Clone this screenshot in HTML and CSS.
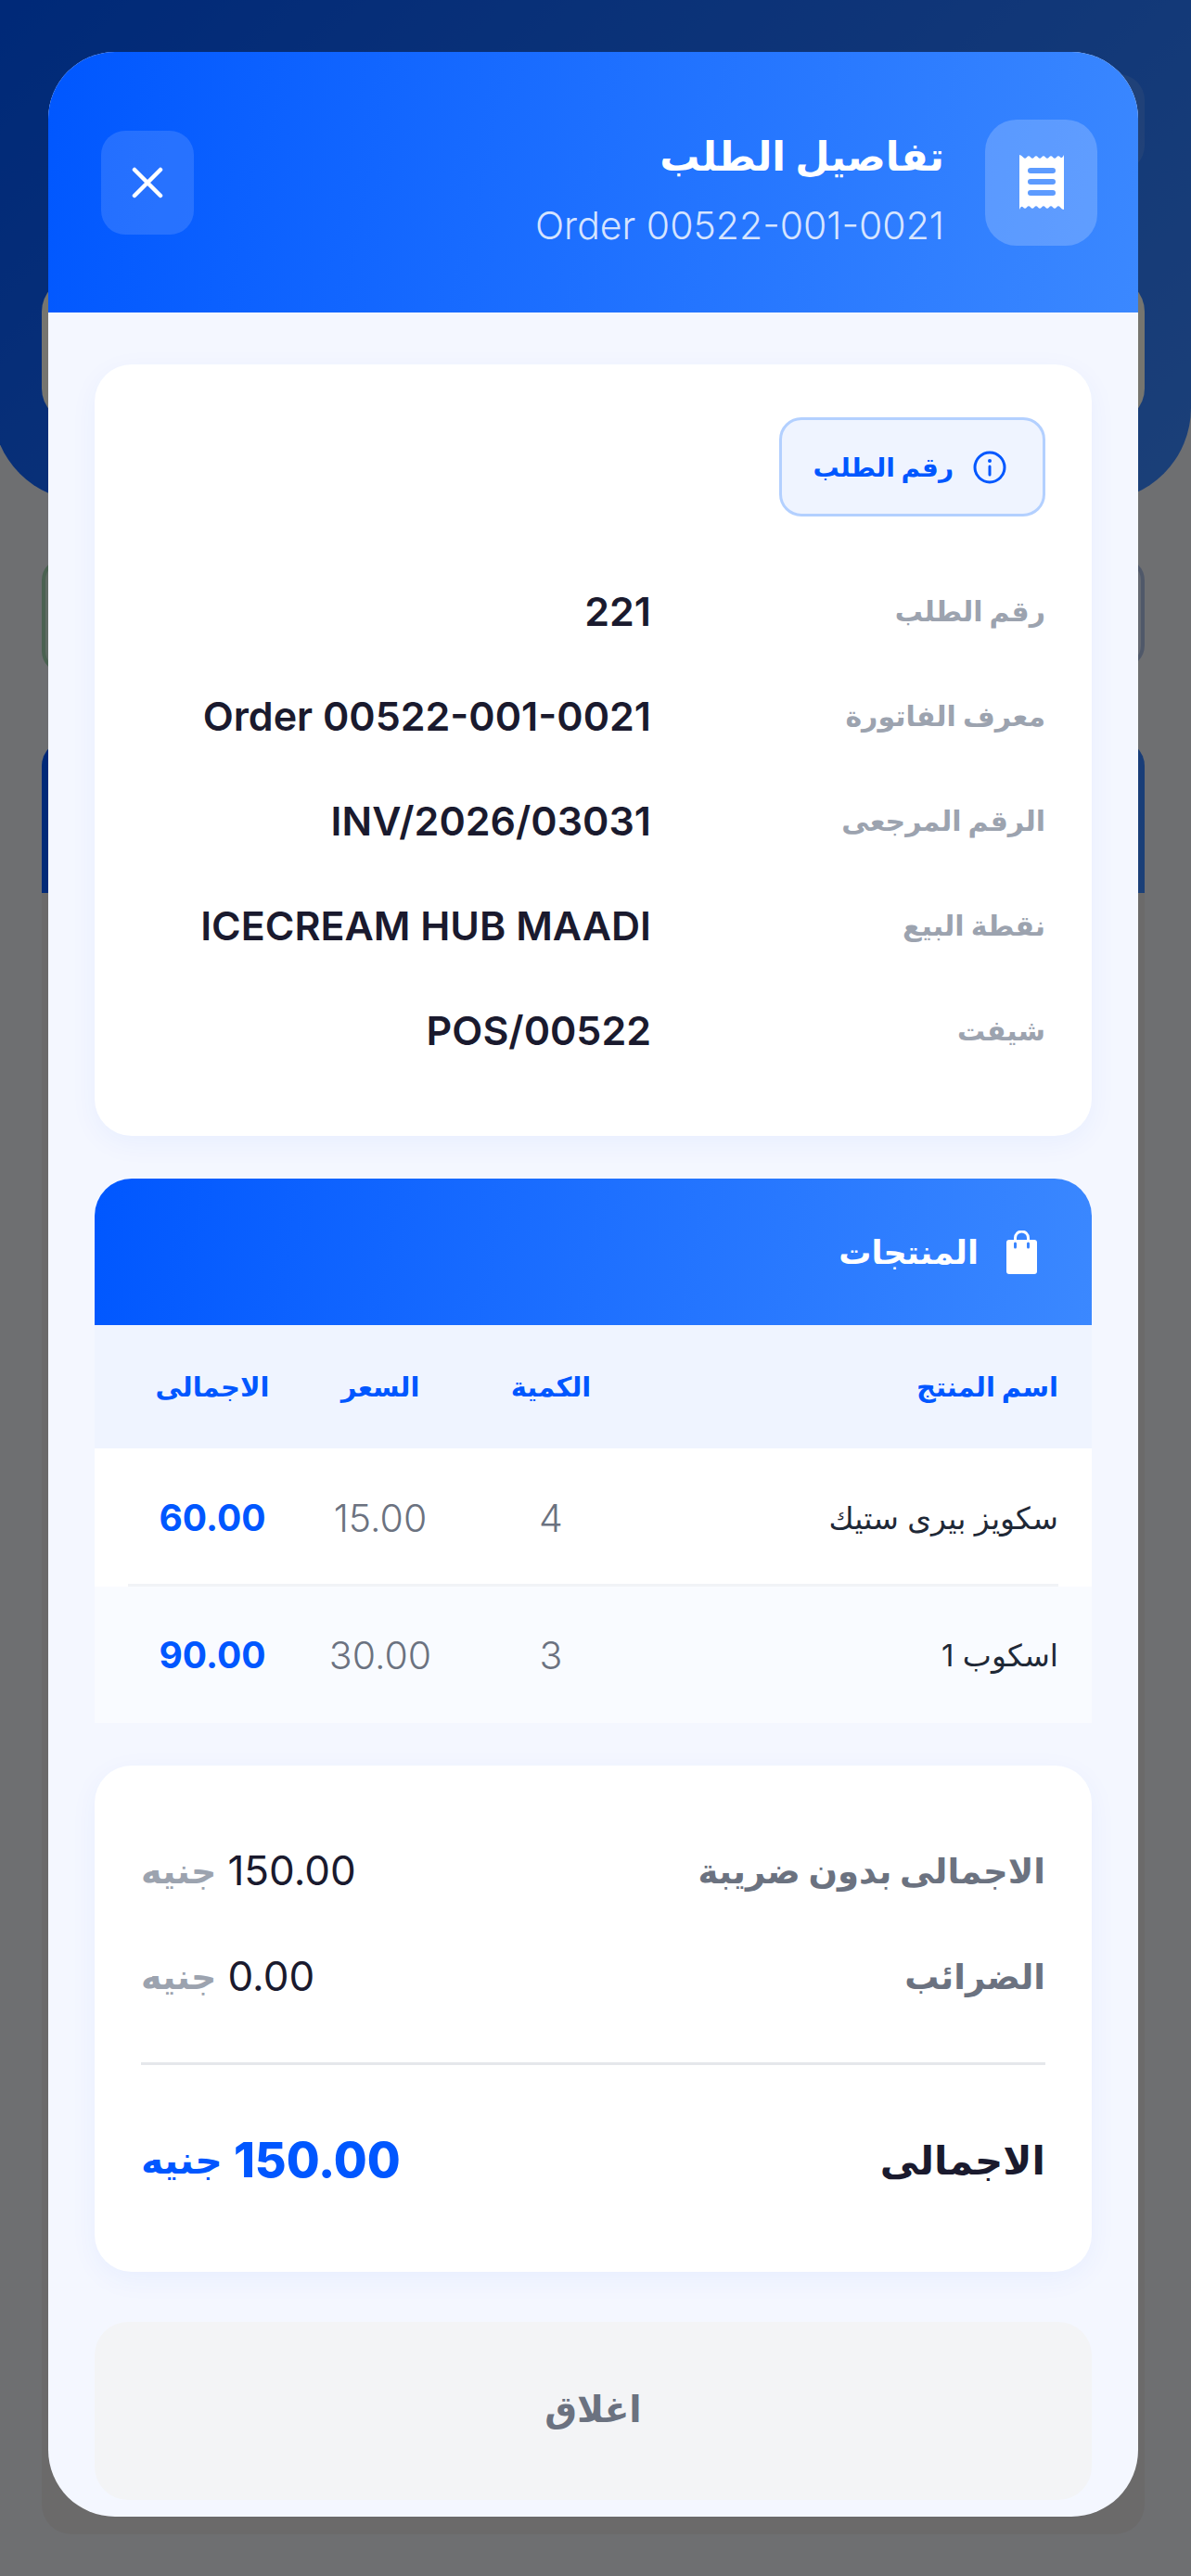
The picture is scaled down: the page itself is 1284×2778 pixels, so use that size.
FILE: index.html
```html
<!DOCTYPE html>
<html lang="ar" dir="rtl">
<head>
    <meta charset="UTF-8">
    <meta name="viewport" content="width=device-width, initial-scale=1.0">
    <title>تفاصيل الطلب</title>
    <link rel="stylesheet" href="styles.css">
</head>
<body>
    <!-- page behind the modal -->
    <div class="page">
        <div class="hero">
            <div class="hero-btn"></div>
            <div class="hero-card"></div>
        </div>
        <div class="status-row">
            <div class="status status-blue"></div>
            <div class="status status-green"></div>
        </div>
        <div class="back-banner"></div>
        <div class="back-list"></div>
    </div>

    <div class="overlay">
        <div class="sheet">
            <div class="sheet-header">
                <div class="title-group">
                    <div class="title-icon">
                        <svg width="48" height="59" viewBox="0 0 48 59">
                            <path fill="#fff" fill-rule="evenodd" d="M0 0q2 0 4 2.5t4 0 4 0 4 0 4 0 4 0 4 0 4 0 4 0 4 0 4 0 4-2.5V59q-2 0-4-2.5t-4 0-4 0-4 0-4 0-4 0-4 0-4 0-4 0-4 0-4 0-4 2.5zM12 14a3 3 0 0 0 0 6h24a3 3 0 0 0 0-6zM12 26a3 3 0 0 0 0 6h24a3 3 0 0 0 0-6zM12 38a3 3 0 0 0 0 6h24a3 3 0 0 0 0-6z"/>
                        </svg>
                    </div>
                    <div class="title-text">
                        <div class="title">تفاصيل الطلب</div>
                        <div class="subtitle"><span dir="ltr">Order 00522-001-0021</span></div>
                    </div>
                </div>
                <button class="close-x">
                    <svg width="34" height="34" viewBox="0 0 34 34">
                        <path d="M3 3l28 28M31 3L3 31" stroke="#fff" stroke-width="4.5" stroke-linecap="round" fill="none"/>
                    </svg>
                </button>
            </div>

            <div class="sheet-body">
                <div class="card info-card">
                    <div class="chip">
                        <svg width="36" height="36" viewBox="0 0 36 36">
                            <circle cx="18" cy="18" r="16" stroke="#0057ff" stroke-width="3" fill="none"/>
                            <path d="M18 17v9" stroke="#0057ff" stroke-width="3" stroke-linecap="round"/>
                            <circle cx="18" cy="11" r="2" fill="#0057ff"/>
                        </svg>
                        <span>رقم الطلب</span>
                    </div>
                    <div class="info-row">
                        <div class="info-label">رقم الطلب</div>
                        <div class="info-value"><span dir="ltr">221</span></div>
                    </div>
                    <div class="info-row">
                        <div class="info-label">معرف الفاتورة</div>
                        <div class="info-value"><span dir="ltr">Order 00522-001-0021</span></div>
                    </div>
                    <div class="info-row">
                        <div class="info-label">الرقم المرجعى</div>
                        <div class="info-value"><span dir="ltr">INV/2026/03031</span></div>
                    </div>
                    <div class="info-row">
                        <div class="info-label">نقطة البيع</div>
                        <div class="info-value"><span dir="ltr">ICECREAM HUB MAADI</span></div>
                    </div>
                    <div class="info-row">
                        <div class="info-label">شيفت</div>
                        <div class="info-value"><span dir="ltr">POS/00522</span></div>
                    </div>
                </div>

                <div class="products">
                    <div class="products-head">
                        <svg width="33" height="47" viewBox="0 0 33 47">
                            <path d="M9.5 13V8a7 7 0 0 1 14 0v5" stroke="#fff" stroke-width="3" fill="none"/>
                            <rect y="10" width="33" height="37" rx="3" fill="#fff"/>
                            <path d="M9.5 14v4M23.5 14v4" stroke="#3a85ff" stroke-width="3" stroke-linecap="round"/>
                        </svg>
                        <span>المنتجات</span>
                    </div>
                    <div class="t-row t-head">
                        <div class="t-name">اسم المنتج</div>
                        <div class="t-cell">الكمية</div>
                        <div class="t-cell">السعر</div>
                        <div class="t-cell">الاجمالى</div>
                    </div>
                    <div class="t-row t-item">
                        <div class="t-name">سكويز بيرى ستيك</div>
                        <div class="t-cell t-num">4</div>
                        <div class="t-cell t-num">15.00</div>
                        <div class="t-cell t-total">60.00</div>
                    </div>
                    <div class="t-row t-item t-alt">
                        <div class="t-name">اسكوب 1</div>
                        <div class="t-cell t-num">3</div>
                        <div class="t-cell t-num">30.00</div>
                        <div class="t-cell t-total">90.00</div>
                    </div>
                </div>

                <div class="card summary">
                    <div class="sum-row">
                        <div class="sum-label">الاجمالى بدون ضريبة</div>
                        <div class="sum-value" dir="ltr"><span class="cur">جنيه</span><span>150.00</span></div>
                    </div>
                    <div class="sum-row">
                        <div class="sum-label">الضرائب</div>
                        <div class="sum-value" dir="ltr"><span class="cur">جنيه</span><span>0.00</span></div>
                    </div>
                    <div class="sum-line"></div>
                    <div class="sum-row sum-total">
                        <div class="sum-label">الاجمالى</div>
                        <div class="sum-value" dir="ltr"><span class="cur">جنيه</span><span>150.00</span></div>
                    </div>
                </div>

                <button class="close-btn">اغلاق</button>
            </div>
        </div>
    </div>
</body>
</html>
```

FILE: styles.css
```css
* {
    box-sizing: border-box;
}

body {
    margin: 0;
    height: 2778px;
    overflow: hidden;
    background-color: #e9ebf1;
    font-family: Inter, "DejaVu Sans", sans-serif;
}

button {
    border: none;
    font-family: inherit;
    padding: 0;
}

/* page behind the modal */
.hero {
    height: 540px;
    margin-left: -8px;
    padding-top: 80px;
    background: linear-gradient(135deg, #0057ff, #3b88ff);
    border-radius: 0 0 100px 100px;
}

.hero-btn {
    width: 100px;
    height: 105px;
    margin-right: 50px;
    background-color: rgba(255, 255, 255, 0.12);
    border-radius: 28px;
}

.hero-card {
    height: 155px;
    margin: 115px 50px 0 53px;
    background-color: #fbf9ec;
    border-radius: 36px;
}

.status-row {
    display: flex;
    gap: 20px;
    margin: 62px 50px 0 45px;
}

.status {
    flex: 1;
    height: 118px;
    border-radius: 24px;
}

.status-blue {
    background-color: #d6dff2;
    border: 4px solid #a9bce0;
}

.status-green {
    height: 124px;
    background-color: #cfe4d4;
    border: 4px solid #9fd0ac;
}

.back-banner {
    height: 165px;
    margin: 72px 50px 0 45px;
    background: linear-gradient(135deg, #0057ff, #3b88ff);
    border-radius: 28px 28px 0 0;
}

.back-list {
    height: 1770px;
    margin: 0 50px 0 45px;
    background-color: #e4e2e1;
    border-radius: 0 0 32px 32px;
}

/* modal */
.overlay {
    position: fixed;
    top: 0;
    left: 0;
    right: 0;
    bottom: 0;
    padding: 56px 57px 64px 52px;
    background-color: rgba(0, 0, 0, 0.53);
}

.sheet {
    height: 2658px;
    background-color: #f4f7ff;
    border-radius: 72px;
    overflow: hidden;
}

.sheet-header {
    display: flex;
    justify-content: space-between;
    align-items: center;
    height: 281px;
    padding: 0 44px 0 57px;
    background: linear-gradient(100deg, #0057ff, #3b88ff);
}

.title-group {
    display: flex;
    align-items: center;
    gap: 44px;
}

.title-icon {
    display: flex;
    justify-content: center;
    align-items: center;
    width: 121px;
    height: 136px;
    background-color: rgba(255, 255, 255, 0.2);
    border-radius: 34px;
}

.title-text {
    padding-top: 8px;
}

.title {
    color: #fff;
    font-size: 43px;
    font-weight: 700;
    line-height: 66px;
}

.subtitle {
    margin-top: 18px;
    color: rgba(255, 255, 255, 0.82);
    font-size: 41px;
    font-weight: 300;
    line-height: 48px;
}

.close-x {
    display: flex;
    justify-content: center;
    align-items: center;
    width: 100px;
    height: 112px;
    background-color: rgba(255, 255, 255, 0.13);
    border-radius: 26px;
}

.sheet-body {
    padding: 56px 50px 0;
}

.card {
    background-color: #fff;
    border-radius: 40px;
    box-shadow: 0 8px 30px rgba(0, 87, 255, 0.05);
}

.info-card {
    padding: 57px 50px 58px;
}

.chip {
    display: flex;
    align-items: center;
    gap: 21px;
    width: fit-content;
    height: 107px;
    padding: 0 39px 0 34px;
    margin-bottom: 45px;
    color: #0057ff;
    font-size: 28px;
    font-weight: 700;
    background-color: #eff4ff;
    border: 3px solid #b3d0ff;
    border-radius: 24px;
}

.info-row {
    display: flex;
    align-items: center;
    height: 113px;
}

.info-label {
    flex: 0 0 425px;
    color: #9ca3af;
    font-size: 30px;
    font-weight: 700;
}

.info-value {
    color: #1a1a2e;
    font-size: 43px;
    font-weight: 600;
}

.products {
    margin-top: 46px;
    background-color: #fff;
    border-radius: 40px 40px 0 0;
    overflow: hidden;
}

.products-head {
    display: flex;
    align-items: center;
    gap: 30px;
    height: 158px;
    padding-right: 59px;
    color: #fff;
    font-size: 35px;
    font-weight: 700;
    background: linear-gradient(100deg, #0057ff, #3b88ff);
}

.t-row {
    display: grid;
    grid-template-columns: 1fr 184px 184px 178px;
    align-items: center;
    padding: 0 36px 0 38px;
}

.t-head {
    height: 133px;
    color: #0057ff;
    font-size: 29px;
    font-weight: 700;
    background-color: #eff4ff;
}

.t-item {
    height: 149px;
    color: #1f2937;
    font-size: 33px;
    background:
        linear-gradient(#f1f3f6, #f1f3f6) 36px 100% / calc(100% - 72px) 3px no-repeat,
        #fff;
}

.t-alt {
    height: 147px;
    background: #f9fbff;
}

.t-cell {
    text-align: center;
}

.t-num {
    color: #6b7280;
    font-size: 41px;
    font-weight: 300;
}

.t-total {
    color: #0057ff;
    font-size: 39px;
    font-weight: 700;
}

.summary {
    margin-top: 46px;
    height: 546px;
    padding: 56px 50px 0;
}

.sum-row {
    display: flex;
    justify-content: space-between;
    align-items: center;
    height: 114px;
}

.sum-label {
    color: #6b7280;
    font-size: 37px;
    font-weight: 700;
}

.sum-value {
    display: flex;
    align-items: center;
    gap: 12px;
    color: #1a1a2e;
    font-size: 44px;
}

.cur {
    color: #9ca3af;
    font-size: 38px;
    font-weight: 700;
}

.sum-line {
    height: 3px;
    margin: 36px 0 45px;
    background-color: #e5e7eb;
}

.sum-total .sum-label {
    color: #1a1a2e;
    font-size: 42px;
}

.sum-total .sum-value {
    color: #0057ff;
    font-size: 52px;
    font-weight: 800;
}

.sum-total .cur {
    color: #0057ff;
    font-size: 41px;
}

.close-btn {
    display: block;
    width: 100%;
    height: 192px;
    margin-top: 54px;
    padding-bottom: 6px;
    color: #6b7280;
    font-size: 39px;
    font-weight: 700;
    background-color: #f3f4f6;
    border-radius: 36px;
}
```
